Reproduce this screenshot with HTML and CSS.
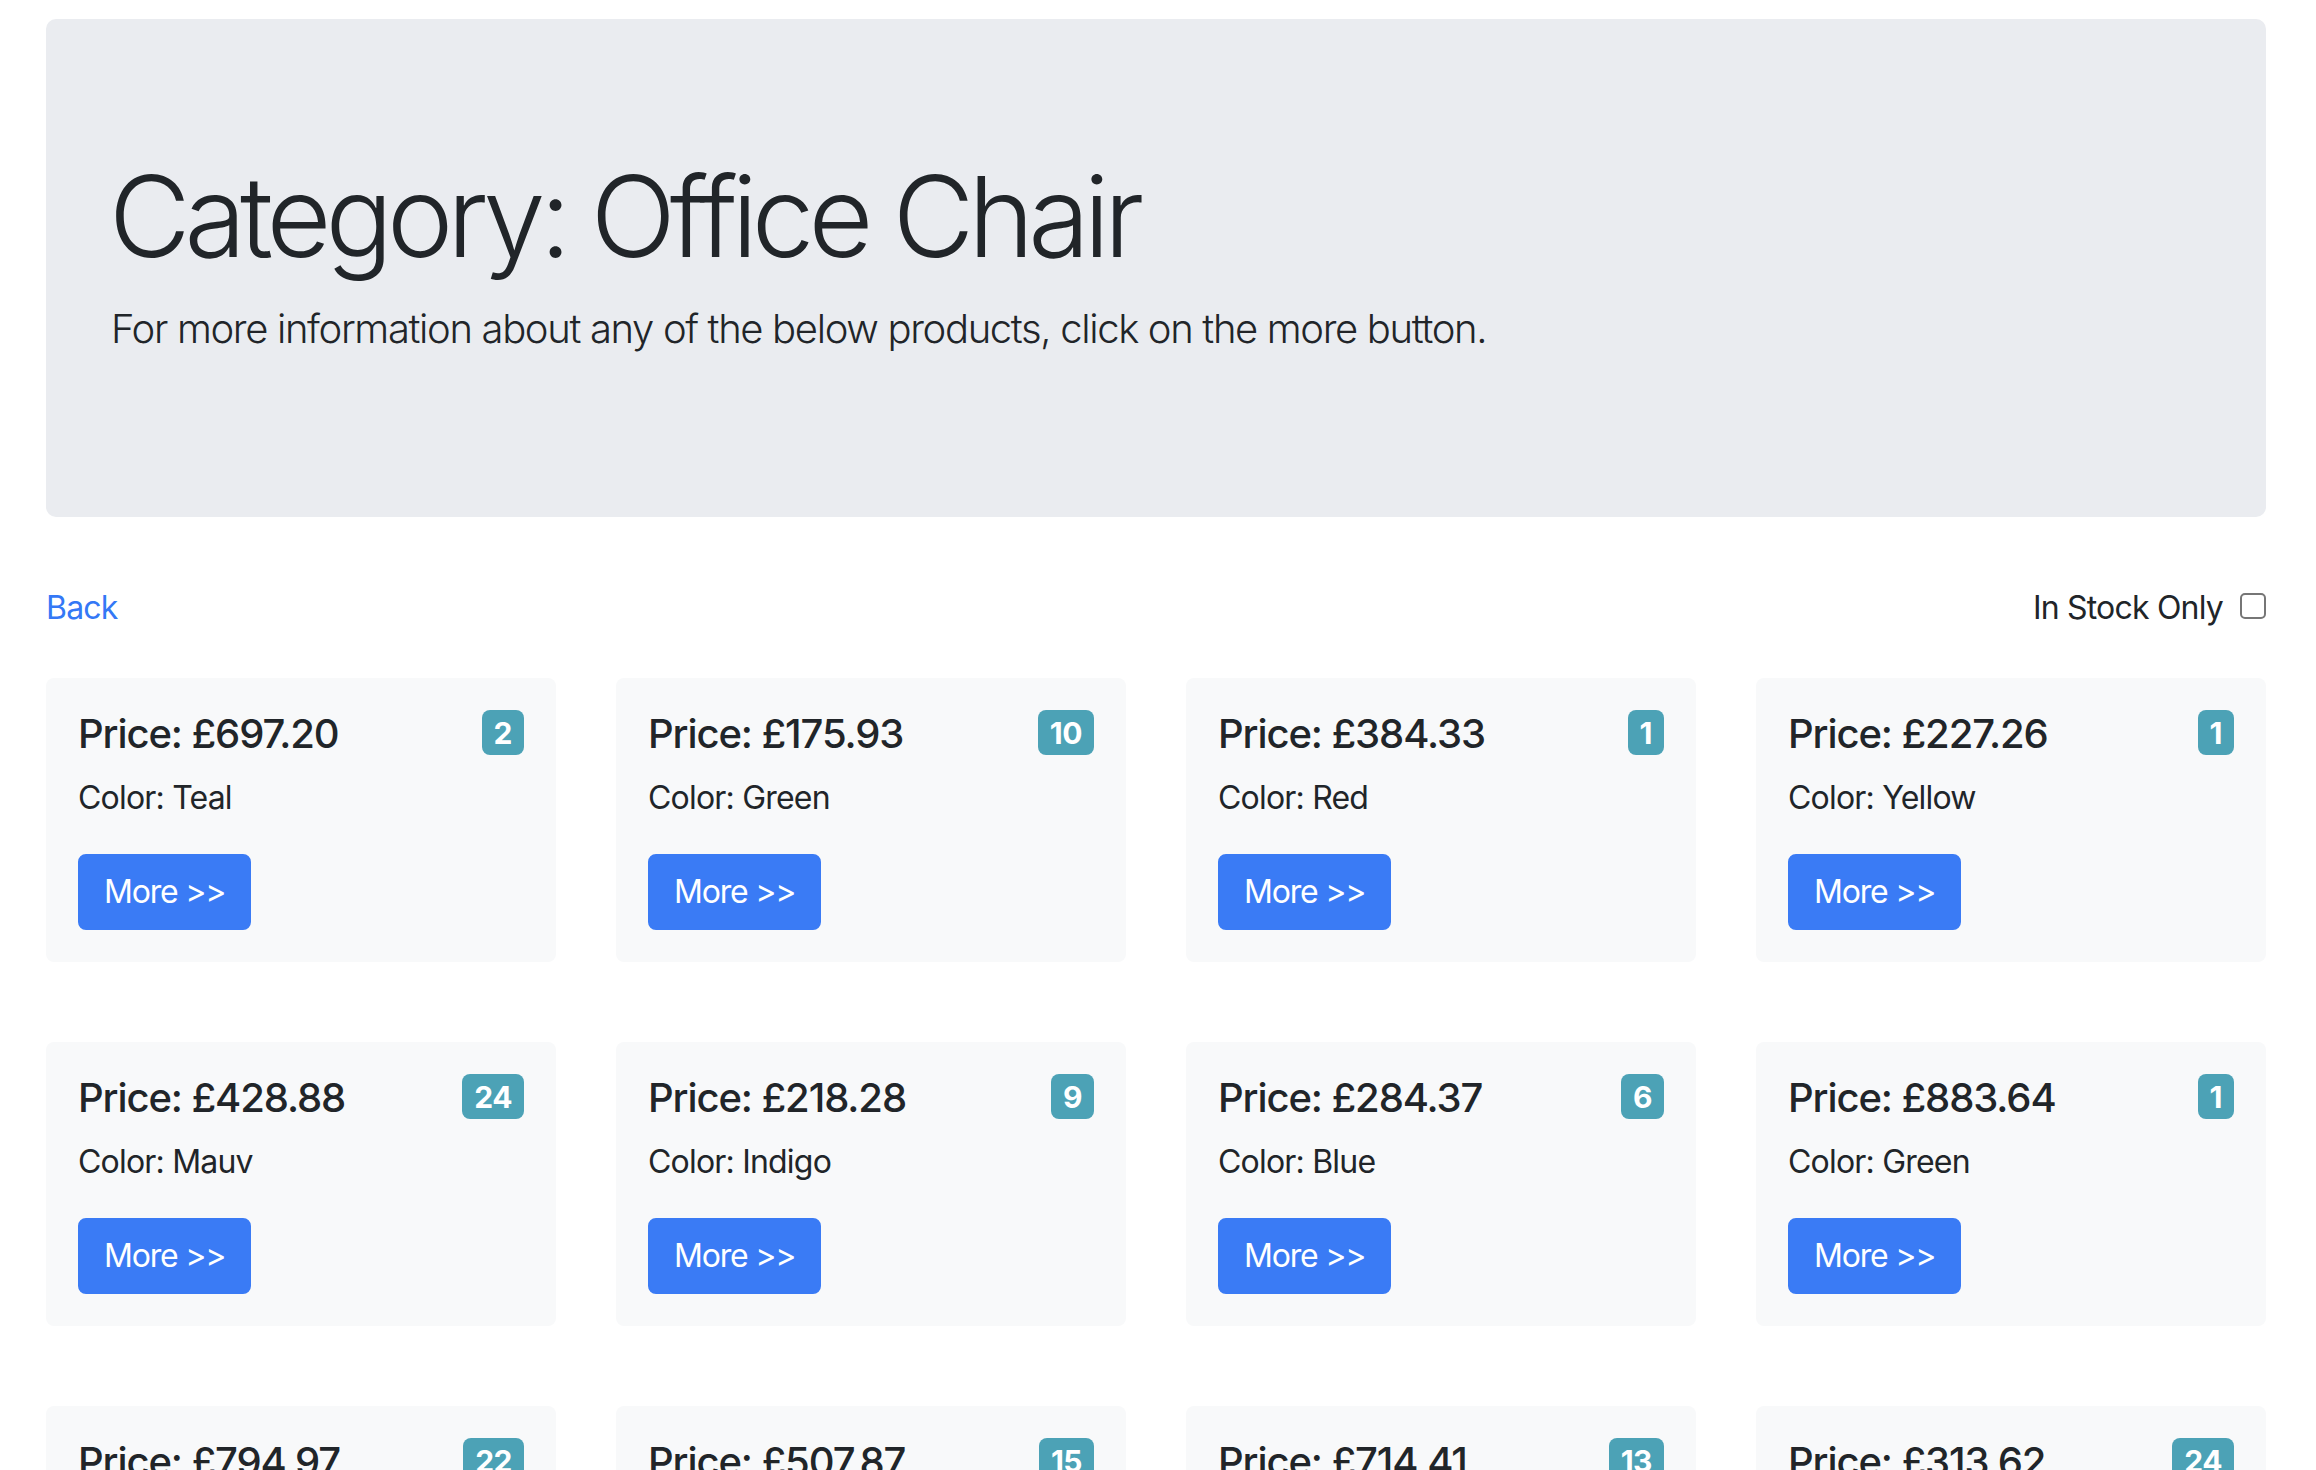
FILE: index.html
```html
<!DOCTYPE html>
<html lang="en">
<head>
<meta charset="utf-8">
<title>Category: Office Chair</title>
<link rel="stylesheet" href="styles.css">
</head>
<body>
<div class="container">
  <header class="jumbotron">
    <h1 class="display">Category: Office Chair</h1>
    <p class="lead">For more information about any of the below products, click on the more button.</p>
  </header>

  <div class="toolbar">
    <a class="back-link" href="#">Back</a>
    <label class="stock-filter">
      <span>In Stock Only</span>
      <input type="checkbox" class="check">
    </label>
  </div>

  <div class="grid">
    <div class="product">
      <div class="product-head"><h5 class="price">Price: £697.20</h5><span class="badge">2</span></div>
      <p class="color">Color: Teal</p>
      <a class="btn" href="#">More &gt;&gt;</a>
    </div>
    <div class="product">
      <div class="product-head"><h5 class="price">Price: £175.93</h5><span class="badge">10</span></div>
      <p class="color">Color: Green</p>
      <a class="btn" href="#">More &gt;&gt;</a>
    </div>
    <div class="product">
      <div class="product-head"><h5 class="price">Price: £384.33</h5><span class="badge">1</span></div>
      <p class="color">Color: Red</p>
      <a class="btn" href="#">More &gt;&gt;</a>
    </div>
    <div class="product">
      <div class="product-head"><h5 class="price">Price: £227.26</h5><span class="badge">1</span></div>
      <p class="color">Color: Yellow</p>
      <a class="btn" href="#">More &gt;&gt;</a>
    </div>

    <div class="product">
      <div class="product-head"><h5 class="price">Price: £428.88</h5><span class="badge">24</span></div>
      <p class="color">Color: Mauv</p>
      <a class="btn" href="#">More &gt;&gt;</a>
    </div>
    <div class="product">
      <div class="product-head"><h5 class="price">Price: £218.28</h5><span class="badge">9</span></div>
      <p class="color">Color: Indigo</p>
      <a class="btn" href="#">More &gt;&gt;</a>
    </div>
    <div class="product">
      <div class="product-head"><h5 class="price">Price: £284.37</h5><span class="badge">6</span></div>
      <p class="color">Color: Blue</p>
      <a class="btn" href="#">More &gt;&gt;</a>
    </div>
    <div class="product">
      <div class="product-head"><h5 class="price">Price: £883.64</h5><span class="badge">1</span></div>
      <p class="color">Color: Green</p>
      <a class="btn" href="#">More &gt;&gt;</a>
    </div>

    <div class="product">
      <div class="product-head"><h5 class="price">Price: £794.97</h5><span class="badge">22</span></div>
      <p class="color">Color: Orange</p>
      <a class="btn" href="#">More &gt;&gt;</a>
    </div>
    <div class="product">
      <div class="product-head"><h5 class="price">Price: £507.87</h5><span class="badge">15</span></div>
      <p class="color">Color: Purple</p>
      <a class="btn" href="#">More &gt;&gt;</a>
    </div>
    <div class="product">
      <div class="product-head"><h5 class="price">Price: £714.41</h5><span class="badge">13</span></div>
      <p class="color">Color: Pink</p>
      <a class="btn" href="#">More &gt;&gt;</a>
    </div>
    <div class="product">
      <div class="product-head"><h5 class="price">Price: £313.62</h5><span class="badge">24</span></div>
      <p class="color">Color: Khaki</p>
      <a class="btn" href="#">More &gt;&gt;</a>
    </div>
  </div>
</div>
</body>
</html>
```

FILE: styles.css
```css
* { box-sizing: border-box; }

html, body {
  margin: 0;
  padding: 0;
  background: #ffffff;
}

body {
  font-family: Inter, "Noto Sans", "Liberation Sans", sans-serif;
  color: #212529;
  font-size: 32px;
  line-height: 48px;
  letter-spacing: -0.8px;
}

.container {
  width: 2220px;
  margin-left: 46px;
  padding-top: 19px;
}

.jumbotron {
  background: #eaecf0;
  border-radius: 10px;
  padding: 130px 65px 126px;
  margin-bottom: 67px;
}

.display {
  margin: 0 0 16px -2px;
  font-size: 112px;
  line-height: 134px;
  font-weight: 300;
  letter-spacing: -6px;
}

.lead {
  margin: 0 0 32px;
  font-size: 40px;
  line-height: 60px;
  font-weight: 300;
  letter-spacing: -1.35px;
}

.toolbar {
  display: flex;
  justify-content: space-between;
  align-items: center;
  height: 48px;
  margin-bottom: 46px;
}

.back-link {
  color: #3478f6;
  text-decoration: none;
}

.stock-filter {
  display: flex;
  align-items: center;
  gap: 17px;
}

.check {
  appearance: none;
  -webkit-appearance: none;
  width: 26px;
  height: 26px;
  margin: 0;
  border: 2px solid #767676;
  border-radius: 5px;
  background: #ffffff;
  position: relative;
  top: -2px;
}

.grid {
  display: grid;
  grid-template-columns: repeat(4, 1fr);
  column-gap: 60px;
  row-gap: 80px;
}

.product {
  background: #f8f9fa;
  border-radius: 8px;
  padding: 32px;
}

.product-head {
  display: flex;
  justify-content: space-between;
  align-items: flex-start;
  margin-bottom: 16px;
}

.price {
  margin: 0;
  font-size: 40px;
  line-height: 48px;
  font-weight: 500;
  letter-spacing: -1.1px;
}

.badge {
  display: inline-block;
  background: #4ca2b6;
  color: #ffffff;
  font-size: 30px;
  font-weight: 700;
  line-height: 30px;
  padding: 7.5px 12px;
  border-radius: 8px;
  letter-spacing: -0.5px;
}

.color {
  margin: 0 0 32px;
}

.btn {
  display: inline-block;
  background: #3a7bf5;
  color: #ffffff;
  text-decoration: none;
  border: 2px solid #3a7bf5;
  border-radius: 8px;
  padding: 12px 24px;
  line-height: 48px;
  font-size: 32px;
  letter-spacing: -1.2px;
}
```
